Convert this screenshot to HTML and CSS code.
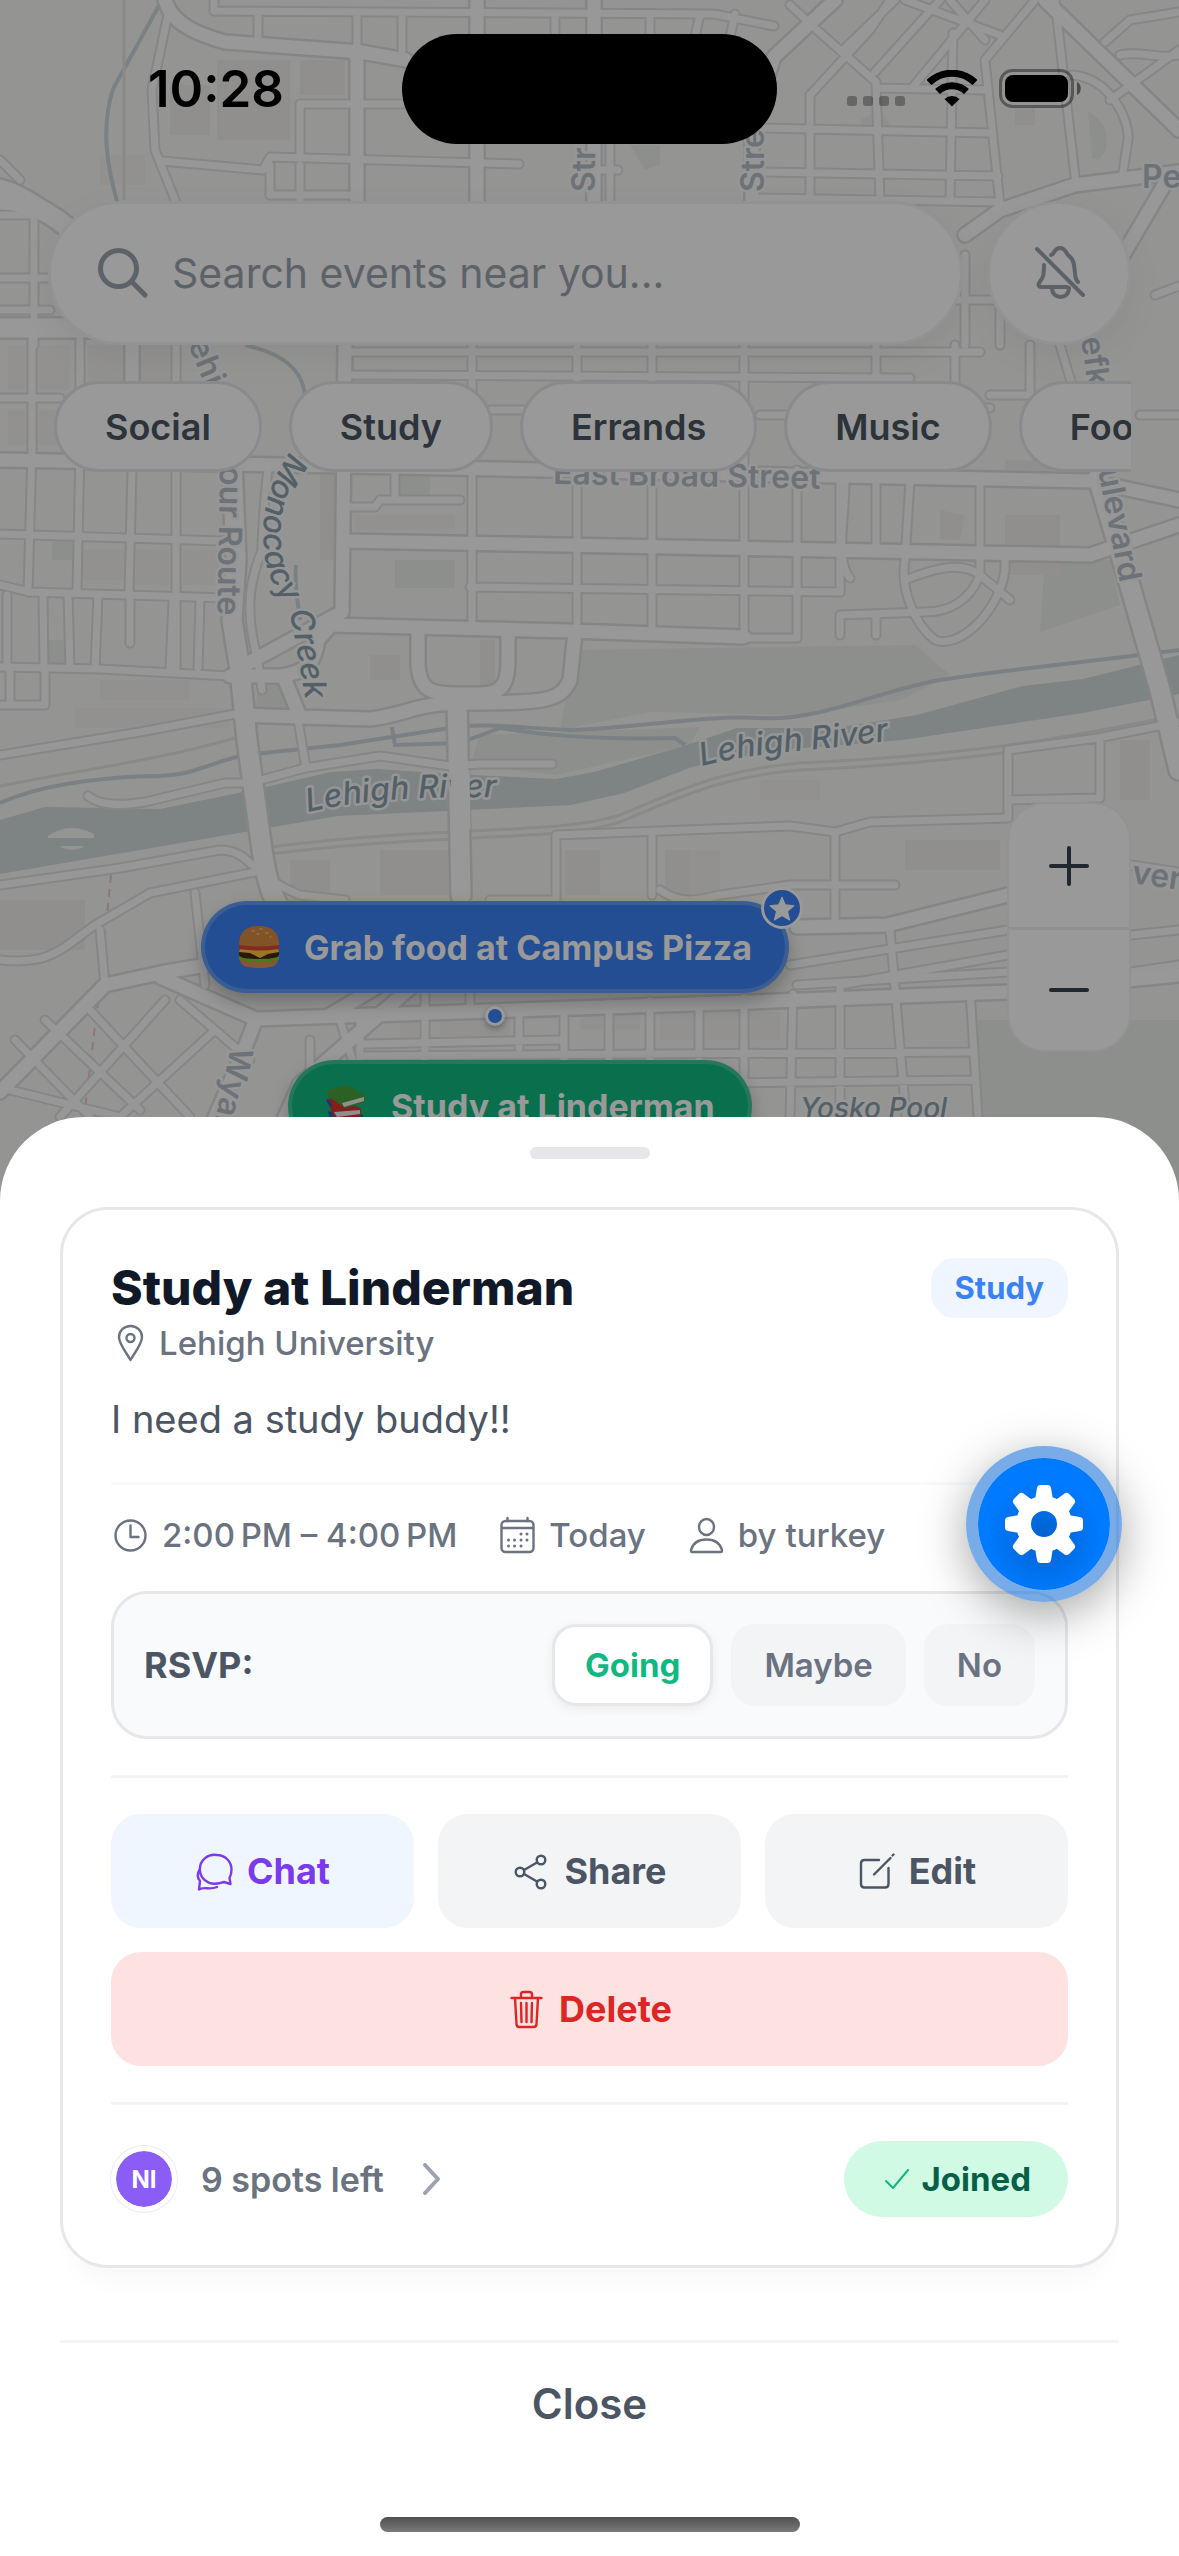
FILE: index.html
```html
<!DOCTYPE html>
<html lang="en">
<head>
<meta charset="utf-8">
<meta name="viewport" content="width=device-width, initial-scale=1">
<title>Study at Linderman</title>
<link rel="stylesheet" href="styles.css">
</head>
<body>
<div class="screen">
  <div class="map">
    <svg class="map-canvas" viewBox="0 0 1179 2556" preserveAspectRatio="xMidYMin slice" aria-hidden="true">
      <defs>
        <g id="streets-minor">
          <path d="M32 340V450L28 592M80 340V450L77 590M132 470L129 592M176 340L176 668M0 398H60M0 534L222 541M7 595V667M43 592L44 670M68 594L70 668M98 596L95 668M130 600V643M173 600L170 670M200 600L198 668M45 670V705H0M10 670V700"/>
          <path d="M0 585L30 592L225 598M0 667L100 669L230 676M268 470C264 500 262 540 262 550C254 570 249 590 250 610C250 640 258 650 262 690"/>
          <path d="M0 755L140 732L235 714M88 796C100 806 120 806 145 802L225 783L250 783L305 768L380 756L450 766L480 764H552M298 720L306 768"/>
          <path d="M472 345V625M577 345V632M652 345V630M744 345V637M797 470V638H744M876 345V400M350 352H980M350 375L910 378M490 410H560M760 415H800M876 410L990 408M470 587L840 592M350 507H375L380 500H460M395 475V500"/>
          <path d="M214 0V11L714 14L774 26M258 14V42M357 14V50M402 14V55M555 14V60M650 14V60M700 14L690 60M735 14L725 60M300 104H402M300 104V158M162 161L263 170L270 157L519 164M270 165V195H357M300 165V200M590 170H618M610 140V200"/>
          <path d="M169 10L152 90L155 150L175 200M0 160L20 180M0 215H48M34 215V345M0 278H50M0 310H50"/>
          <path d="M817 30L876 82L880 200M810 95L870 30L890 0M843 50L895 0M875 72L940 0M912 88L985 0M790 5L817 30M905 0L1000 35M950 0L985 40M953 33L950 200M985 60L1000 205M985 60L1035 0M876 88L985 90M760 128L990 133M760 172L998 176M760 198L1000 202M810 95V200"/>
          <path d="M1055 0L1076 185M1072 75C1110 78 1130 120 1128 140L1122 178M1105 42L1130 20L1179 12M1110 100L1179 50M1120 55C1140 50 1160 60 1179 55M965 255V345M1000 250V345M930 300H1000M955 345V400M1030 345V395H990M1179 286L1155 295M1179 415H1140M1060 345L1100 478"/>
          <path d="M845 480C845 520 835 560 850 578M840 480V592M876 480V548M905 560C900 590 915 625 935 640C960 650 1000 610 1005 570V550M905 580C930 570 960 560 980 575L1010 600M980 575C970 600 950 612 925 612L840 615V635M876 615V635M910 480L905 560M980 480V575"/>
          <path d="M0 885L120 868L220 850C250 850 250 875 300 895L345 900M0 960C50 965 60 950 95 925L150 893L265 870M195 893L205 985M100 930L105 985M556 900V835L790 826L835 832L870 822L1008 818V750L1098 738L1179 722M652 833V895M835 832V922M1100 738V798L1008 800M660 890C680 905 700 900 720 895L790 885H895M490 900H556"/>
          <path d="M360 1015V1117M425 1012V1060M519 1008V1048M564 1006V1117M609 1003V1117M650 1001V1117M699 1000V1117M744 998V1117M793 994L790 1117M840 985V1117M890 930L906 1117M970 990L978 1117M365 1044L560 1040M365 1056L970 1052M560 1085L975 1080M340 1020L370 1117M310 1040V1117M470 990V1010M425 990V1012M790 965L1008 930M840 985L1008 955M797 985L1008 972M1131 935L1179 930M1131 972L1179 965M1131 865L1179 872"/>
          <path d="M10 1090L120 1117M15 1040L90 1117M45 1020L140 1110M90 1010L190 1117M165 1000L60 1117M215 1030L120 1117M180 1000L250 1060"/>
        </g>
        <g id="streets-major">
          <path d="M0 460L346 466L1090 481L1179 500M345 345L342 612L245 665M331 625L571 631L744 637M345 541L1090 555L1179 525"/>
          <path d="M418 630V665C420 690 430 694 457 694H480C505 694 508 680 508 660V632M575 632L570 680C560 702 545 703 457 703"/>
          <path d="M230 676H280C310 672 315 660 318 640L331 625M240 715L300 717L370 719C400 716 420 703 457 703M285 680L300 717"/>
          <path d="M165 0C172 25 200 35 225 42L361 52L406 60M357 50V200M477 0V205M594 0V205M752 100V205M835 0L774 57L760 100M132 340V460"/>
          <path d="M1045 0L1179 130M965 235L1000 210L1075 185L1179 172M1170 175L1120 260M0 186C20 190 50 210 85 240"/>
          <path d="M0 1092L105 985L165 972L265 955M160 977L256 1019L240 1060L215 1117M256 1019L752 1002L1008 992L1179 975M425 975L300 1084L285 1117M797 927L887 925L1008 895M380 985L330 1015"/>
        </g>
        <g id="highways">
          <path d="M232 460L236 560L232 620L240 670L247 740L262 850C268 890 275 910 300 930L340 960"/>
          <path d="M457 700L461 895M1098 478L1128 579L1160 690L1179 770M0 200C30 200 60 215 90 250M0 328H100"/>
        </g>
      </defs>

      <rect width="1179" height="2556" class="land"/>
      <path class="park" d="M560 730L575 650L915 645L950 675L900 700L800 715L650 712ZM1045 560H1110L1120 605L1040 632ZM395 560H455V588H395ZM395 470H430V500H395ZM52 540H74V560H52ZM46 640H68V665H46ZM258 680H285L298 712H256ZM470 765L480 735L700 727L690 745L600 765L556 775ZM1088 112C1110 120 1112 150 1098 160L1092 158ZM630 145H660V165L645 170ZM970 1020H1179V1180H985Z"/>
      <path class="built" d="M217 60H290V140H217ZM170 85H210V135H170ZM300 60H345V95H300ZM1005 460H1050V480H1005ZM1005 515H1060V575H1005ZM940 510L965 515L960 540H940ZM320 470H340V560H320ZM380 850H455V895H380ZM290 860H330V905H290ZM905 840H1000V870H905ZM1120 740H1150V800H1120ZM0 900H85V950H0ZM565 850H600V895H565ZM665 850H690V895H665ZM860 120L880 108L890 125H862ZM1015 108H1035V125H1015ZM370 655H400V680H370ZM480 640H495V690H480ZM835 240H870V262H835Z"/>
      <path class="built faint" d="M8 345H70V390H8ZM88 345H125V440H88ZM140 345H172V380H140ZM8 410H70V445H8ZM80 550H125V580H80ZM135 550H170V585H135ZM182 550H218V585H182ZM355 515H455V530H355ZM100 680H190V700H100ZM75 708H230V728H75ZM400 1020H420V1040H400ZM440 1020H510V1036H440ZM580 1012H640V1030H580ZM660 1012H780V1040H660ZM760 780H820V800H760ZM690 850H720V895H690ZM100 155H145V185H100Z"/>
      <path class="water" d="M0 820L45 807L160 809L248 791L331 772L376 769L451 774L556 779L594 772L684 746L737 728L835 728L917 715L1023 686L1083 679L1179 655V694L1083 713L902 740L767 751L692 767L624 793L571 805L338 816L256 830L0 874Z"/>
      <path class="land" d="M48 836C60 828 75 824 94 834V838H48ZM60 846H84C80 851 64 851 60 846Z"/>
      <path class="stream" d="M0 803C40 785 90 778 150 776C190 778 210 762 245 755L340 745L450 728C480 722 520 728 570 730C640 728 700 715 760 718C820 722 880 690 940 680C1000 670 1040 668 1179 650M392 727L395 745L460 743L500 728C540 735 600 740 675 738L685 745M162 0L113 89C100 130 108 170 118 205M245 345C290 355 305 375 305 400L300 440M296 565C294 590 298 600 300 620"/>
      <path class="rail" d="M1179 715C1080 735 980 755 800 763C720 770 680 790 620 815C560 835 440 825 270 847M1179 722C1080 742 980 762 800 770C720 777 680 797 620 822C560 842 440 832 270 854M0 786C80 770 160 760 235 738M124 0V200"/>
      <path class="trail" d="M111 875L100 985L84 1117"/>

      <use href="#streets-minor" class="minor-casing"/>
      <use href="#streets-major" class="major-casing"/>
      <use href="#highways" class="highway-casing"/>
      <use href="#streets-minor" class="minor"/>
      <use href="#streets-major" class="major"/>
      <use href="#highways" class="highway"/>

      <path id="creek-line" d="M290 452C264 490 262 520 264 550C268 590 288 600 292 625C300 660 302 690 318 760" fill="none"/>
      <path id="river-west" d="M308 812C360 800 430 794 540 799" fill="none"/>
      <path id="river-east" d="M702 766C760 750 830 752 930 734" fill="none"/>
      <g class="road-label">
        <text transform="translate(220 466) rotate(91)">our Route</text>
        <text transform="translate(188 344) rotate(68)">ehi</text>
        <text transform="translate(595 192) rotate(-90)">Str</text>
        <text transform="translate(764 192) rotate(-90)">Stre</text>
        <text transform="translate(1081 338) rotate(82)">efk</text>
        <text transform="translate(1098 470) rotate(79)">ulevard</text>
        <text transform="translate(231 1046) rotate(102)">Wyan</text>
        <text transform="translate(553 484) rotate(1)">East Broad Street</text>
        <text x="1142" y="188">Pe</text>
        <text transform="translate(1131 883) rotate(8)">ver</text>
      </g>
      <g class="water-label">
        <text><textPath href="#creek-line">Monocacy Creek</textPath></text>
        <text><textPath href="#river-west">Lehigh River</textPath></text>
        <text><textPath href="#river-east">Lehigh River</textPath></text>
        <text class="place-label" x="800" y="1118">Yosko Pool</text>
      </g>
      <path class="highway bridge" d="M460 770L461 830"/>
    </svg>

    <button class="pin pin-food" type="button">
      <svg class="emoji" viewBox="0 0 42 44" aria-hidden="true">
        <path d="M2 34H40C40 41 34 43 21 43S2 41 2 34Z" fill="#d99355"/>
        <path d="M1 32C5 30 37 30 41 32C42 36 38 36 36 35C33 39 29 36 26 36C22 39 18 36 15 36C11 39 8 35 6 35C2 36 0 35 1 32Z" fill="#7fc832"/>
        <path d="M1 27H41C42 33 37 34 21 34S0 33 1 27Z" fill="#4b2613"/>
        <path d="M2 24H40L41 27L30 29L22 33L12 28L1 27Z" fill="#ffc83a"/>
        <path d="M1 20H41V24Q21 27 1 24Z" fill="#e0453a"/>
        <path d="M1 20C1 7 8 1 21 1S41 7 41 20Q21 23 1 20Z" fill="#d98a42"/>
        <path d="M14 6h2M22 4h2M28 8h2M19 9h2M32 12h1" stroke="#f8dfae" stroke-width="1" stroke-linecap="round"/>
      </svg>
      <span>Grab food at Campus Pizza</span>
      <span class="pin-badge">
        <svg viewBox="0 0 24 24" aria-hidden="true"><path d="M12 2l3 7 8 1-6 5 2 8-7-4-7 4 2-8-6-5 8-1z" fill="#fff" stroke="#fff" stroke-linejoin="round"/></svg>
      </span>
    </button>
    <span class="pin-dot"></span>
    <button class="pin pin-study" type="button">
      <svg class="emoji" viewBox="0 0 42 44" aria-hidden="true">
        <path d="M3 27L28 35L38 30V38L26 43L5 36Z" fill="#3155b8"/>
        <path d="M2 15L8 14L36 24V32L28 36L8 32Z" fill="#d93632"/>
        <path d="M9 28L35 26V30L12 33Z" fill="#eeeeec"/>
        <path d="M1 15L5 17L8 24L3 20Z" fill="#3155b8"/>
        <path d="M2 6L22 1L40 11V18L20 24L3 12Z" fill="#49a33d"/>
        <path d="M17 19L39 13V17L19 23Z" fill="#eeeeec"/>
      </svg>
      <span>Study at Linderman</span>
    </button>

    <div class="zoom">
      <button type="button" aria-label="Zoom in"><svg viewBox="0 0 40 40"><path d="M20 2V38M2 20H38"/></svg></button>
      <button type="button" aria-label="Zoom out"><svg viewBox="0 0 40 40"><path d="M2 20H38"/></svg></button>
    </div>
  </div>

  <div class="status">
    <time class="clock">10:28</time>
    <span class="island"></span>
    <div class="indicators">
      <svg class="signal" viewBox="0 0 58 38" aria-hidden="true"><g fill="#000" opacity=".3"><rect x="0" y="26" width="10" height="10" rx="3"/><rect x="16" y="26" width="10" height="10" rx="3"/><rect x="32" y="26" width="10" height="10" rx="3"/><rect x="48" y="26" width="10" height="10" rx="3"/></g></svg>
      <svg class="wifi" viewBox="0 0 50 38" aria-hidden="true"><g fill="none" stroke="#000" stroke-width="7"><path d="M2 12.500A33 33 0 0 1 48 12.500"/><path d="M10.500 21.500A21 21 0 0 1 39.500 21.500"/></g><path d="M17.500 29A11 11 0 0 1 32.500 29L25 36.500Z"/></svg>
      <svg class="battery" viewBox="0 0 82 40" aria-hidden="true"><rect x="1.500" y="1.500" width="72" height="36" rx="12" fill="none" stroke="#000" stroke-opacity=".4" stroke-width="3"/><rect x="6" y="6" width="63" height="27" rx="8"/><path d="M78 13C83 15 83 24 78 26Z" fill-opacity=".5"/></svg>
    </div>
  </div>

  <header class="header">
    <div class="search-row">
      <div class="search">
        <label for="search" aria-label="Search events">
          <svg viewBox="0 0 50 50" aria-hidden="true"><circle cx="20.500" cy="20.500" r="18"/><path d="M34 34L47 47"/></svg>
        </label>
        <input id="search" type="text" placeholder="Search events near you...">
      </div>
      <button class="bell" type="button" aria-label="Notifications off">
        <svg viewBox="0 0 52 54" aria-hidden="true"><path d="M4 3L50 49M18 9C21 9 21 2 27 2S33 8 36 10C42 14 41 21 42 27C42 32 43 34 45 36M11 19C11 30 10 32 6 37C5 39 6 41 8 41H34M19 42C19 54 36 54 36 42"/></svg>
      </button>
    </div>
    <nav class="chips" aria-label="Categories">
      <button class="chip" type="button">Social</button>
      <button class="chip" type="button">Study</button>
      <button class="chip" type="button">Errands</button>
      <button class="chip" type="button">Music</button>
      <button class="chip" type="button">Food</button>
    </nav>
  </header>

  <div class="backdrop"></div>

  <main class="sheet">
    <div class="handle"></div>
    <article class="card">
      <div class="card-head">
        <h1>Study at Linderman</h1>
        <span class="tag">Study</span>
      </div>
      <p class="place">
        <svg class="icon" viewBox="0 0 39 39" aria-hidden="true"><path d="M19.500 36C15 28 8 20 8 13A11.500 11 0 0 1 31 13C31 20 24 28 19.500 36Z"/><circle cx="19.500" cy="14" r="4"/></svg>
        <span>Lehigh University</span>
      </p>
      <p class="about">I need a study buddy!!</p>
      <ul class="meta">
        <li>
          <svg class="icon" viewBox="0 0 39 39" aria-hidden="true"><circle cx="19.500" cy="19.500" r="15"/><path d="M19.500 9.500V21H27.500"/></svg>
          <span>2:00&#8239;PM – 4:00&#8239;PM</span>
        </li>
        <li>
          <svg class="icon" viewBox="0 0 39 39" aria-hidden="true"><rect x="3.500" y="5" width="32" height="31" rx="4"/><path d="M4 12H35M9.500 2V5M29.500 2V5"/><path class="dots" d="M23 18h.01M29 18h.01M10.500 24h.01M16.500 24h.01M23 24h.01M29 24h.01M10.500 30h.01M16.500 30h.01M23 30h.01"/></svg>
          <span>Today</span>
        </li>
        <li>
          <svg class="icon" viewBox="0 0 39 39" aria-hidden="true"><ellipse cx="19.500" cy="11" rx="7.500" ry="8"/><path d="M5 36C4 36 4 35 4 34C6 27 12 23.500 19.500 23.500S33 27 35 34C35 35 35 36 34 36Z"/></svg>
          <span>by turkey</span>
        </li>
      </ul>
      <div class="rsvp" role="group" aria-labelledby="rsvp-label">
        <span id="rsvp-label">RSVP:</span>
        <button class="answer chosen" type="button" aria-pressed="true">Going</button>
        <button class="answer" type="button" aria-pressed="false">Maybe</button>
        <button class="answer" type="button" aria-pressed="false">No</button>
      </div>
      <div class="actions">
        <button class="action chat" type="button">
          <svg class="icon" viewBox="0 0 39 39" aria-hidden="true"><path d="M22 3A14.500 14.500 0 1 0 22 31.500C25 31.500 26.500 30.500 29 30L35.500 32L34.500 26C35.500 24 36.500 21 36.500 17.500A14.500 14.500 0 0 0 22 3Z"/><path d="M4.500 18C2 22 2.500 26 5 29L4 37.500C9 34 14 38.500 22 35"/></svg>
          Chat
        </button>
        <button class="action" type="button">
          <svg class="icon" viewBox="0 0 39 39" aria-hidden="true"><circle cx="8" cy="20" r="4.300"/><circle cx="29" cy="8" r="4.300"/><circle cx="29" cy="32" r="4.300"/><path d="M12 18L25 10.500M12 22L25 29.500"/></svg>
          Share
        </button>
        <button class="action" type="button">
          <svg class="icon" viewBox="0 0 39 39" aria-hidden="true"><path d="M22 8H7.500Q4 8 4 11.500V32Q4 35.500 7.500 35.500H28Q31.500 35.500 31.500 32V16M17 22.500L33.500 6M35.500 3.500L36.500 2.500"/></svg>
          Edit
        </button>
        <button class="action delete" type="button">
          <svg class="icon" viewBox="0 0 39 39" aria-hidden="true"><path d="M4.500 8H34.500M8 8L9.500 34Q9.500 37 12.500 37H26.500Q29.500 37 29.500 34L31 8M14 8V4.500Q14 2 16.500 2H22.500Q25 2 25 4.500V8M14 13L14.500 32M19.500 13V32M25 13L24.500 32"/></svg>
          Delete
        </button>
      </div>
      <div class="people">
        <button class="guests" type="button">
          <span class="avatar">NI</span>
          <span>9 spots left</span>
          <svg viewBox="0 0 18 32" aria-hidden="true"><path d="M2 2L15 16L2 30"/></svg>
        </button>
        <button class="joined" type="button">
          <svg viewBox="0 0 26 24" aria-hidden="true"><path d="M2 14L9 21L24 3"/></svg>
          Joined
        </button>
      </div>
    </article>
    <footer class="foot">
      <button class="close" type="button">Close</button>
    </footer>
    <div class="home-bar"></div>
    <button class="settings" type="button" aria-label="Settings">
      <svg viewBox="-40 -40 80 80" aria-hidden="true">
        <defs><path id="tooth" d="M-9 -24L-7 -36Q-6.500 -39 -3.500 -39H3.500Q6.500 -39 7 -36L9 -24Z"/></defs>
        <g fill="#fff"><use href="#tooth"/><use href="#tooth" transform="rotate(45)"/><use href="#tooth" transform="rotate(90)"/><use href="#tooth" transform="rotate(135)"/><use href="#tooth" transform="rotate(180)"/><use href="#tooth" transform="rotate(225)"/><use href="#tooth" transform="rotate(270)"/><use href="#tooth" transform="rotate(315)"/></g>
        <circle r="20.500" fill="none" stroke="#fff" stroke-width="15"/>
      </svg>
    </button>
  </main>
</div>
</body>
</html>
```
FILE: styles.css
```css
* { box-sizing: border-box; }
body { margin: 0; font-family: Inter, "Liberation Sans", sans-serif; color: #4b5563; }
button { margin: 0; padding: 0; border: 0; background: none; font: inherit; color: inherit; white-space: nowrap; }
h1, p, ul { margin: 0; padding: 0; list-style: none; }
svg { display: block; flex: none; }

.screen { position: relative; min-height: 100vh; display: flex; flex-direction: column; overflow: hidden; }

/* Map */
.map { position: absolute; inset: 0; background: #f7f7f4; }
.map-canvas { width: 100%; height: 100%; }
.land { fill: #f7f7f4; }
.park { fill: #ebefe9; }
.built { fill: #f0efed; }
.faint { opacity: .6; }
.water { fill: #d3dadc; }
.stream { fill: none; stroke: #ccd6da; stroke-width: 4; }
.rail { fill: none; stroke: #e6e5e2; stroke-width: 3; }
.trail { fill: none; stroke: #e6c8c6; stroke-width: 2; stroke-dasharray: 8 6; }
.minor-casing, .minor, .major-casing, .major, .highway-casing, .highway { fill: none; stroke-linecap: round; stroke-linejoin: round; }
.minor-casing { stroke: #e0e0df; stroke-width: 11; }
.minor { stroke: #fcfcfc; stroke-width: 7; }
.major-casing { stroke: #dedede; stroke-width: 18; }
.major { stroke: #fdfdfd; stroke-width: 13; }
.highway-casing { stroke: #dedede; stroke-width: 24; }
.highway { stroke: #fdfdfd; stroke-width: 19; }
.bridge { stroke-linecap: butt; }
.road-label, .water-label { font-family: Inter, sans-serif; font-size: 32px; paint-order: stroke; stroke: #fafafa; stroke-width: 5; stroke-linejoin: round; }
.road-label { fill: #b4bfc8; font-weight: 600; }
.water-label { fill: #8aa0ae; font-style: italic; font-weight: 500; }
.place-label { font-size: 28px; }

.pin { position: absolute; height: 92px; display: flex; align-items: center; gap: 24px; padding: 0 33px; border: 4px solid rgba(255, 255, 255, .2); border-radius: 46px; color: #fff; font-size: 34px; font-weight: 700; box-shadow: 0 9px 18px rgba(0, 0, 0, .25); }
.pin-food { left: 201px; top: 901px; background-color: #3b82f6; }
.pin-study { left: 288px; top: 1060px; background-color: #10b981; }
.emoji { width: 42px; height: 44px; }
.pin-badge { position: absolute; right: -18px; top: -18px; width: 42px; height: 42px; display: grid; place-items: center; border: 3px solid #fff; border-radius: 50%; background: #3b82f6; }
.pin-badge svg { width: 26px; height: 26px; }
.pin-dot { position: absolute; left: 485px; top: 1006px; width: 20px; height: 20px; border: 3px solid #fff; border-radius: 50%; background: #3b82f6; box-shadow: 0 3px 6px rgba(0, 0, 0, .3); }

.zoom { position: absolute; right: 50px; top: 804px; width: 120px; display: grid; border-radius: 36px; background: #fff; box-shadow: 0 0 0 2px #f3f4f6; }
.zoom button { height: 123px; display: grid; place-items: center; }
.zoom button + button { border-top: 3px solid #f0f1f3; }
.zoom svg { width: 40px; height: 40px; fill: none; stroke: #374151; stroke-width: 4; stroke-linecap: round; }

/* Status bar */
.status { position: relative; z-index: 2; display: grid; grid-template-columns: 1fr 375px 1fr; align-items: center; padding-top: 34px; color: #000; }
.clock { padding-left: 148px; font-size: 51px; font-weight: 600; line-height: 60px; }
.island { height: 110px; border-radius: 55px; background: #000; }
.indicators { display: flex; justify-content: flex-end; align-items: center; gap: 22px; padding-right: 98px; }
.signal { width: 58px; height: 38px; }
.wifi { width: 50px; height: 38px; }
.battery { width: 82px; height: 40px; }

/* Search and categories */
.header { position: relative; padding: 57px 48px 0; }
.search-row { display: flex; gap: 24px; }
.search { flex: 1; height: 144px; display: flex; align-items: center; gap: 24px; padding: 0 47px; border: 3px solid #f3f4f6; border-radius: 72px; background: #fff; box-shadow: 0 12px 36px rgba(0, 0, 0, .06); }
.search svg { width: 50px; height: 50px; fill: none; stroke: #9ca3af; stroke-width: 5; stroke-linecap: round; }
.search input { flex: 1; min-width: 0; height: 60px; padding: 0; border: 0; outline: 0; background: none; font: 400 41px Inter, sans-serif; }
.search input::placeholder { color: #9ca3af; opacity: 1; }
.bell { width: 144px; height: 144px; display: grid; place-items: center; border: 3px solid #f3f4f6; border-radius: 50%; background: #fff; box-shadow: 0 12px 36px rgba(0, 0, 0, .06); }
.bell svg { width: 52px; height: 54px; fill: none; stroke: #9ca3af; stroke-width: 4; stroke-linecap: round; stroke-linejoin: round; }
.chips { display: flex; gap: 27px; margin-top: 36px; padding: 0 0 12px 6px; overflow: hidden; }
.chip { flex: none; height: 91px; padding: 0 48px; border: 3px solid #e5e7eb; border-radius: 46px; background: #fff; color: #4b5563; font-size: 36px; font-weight: 600; }

.backdrop { position: absolute; inset: 0; z-index: 1; background: rgba(0, 0, 0, .4); }

/* Bottom sheet */
.sheet { position: relative; z-index: 2; margin-top: auto; padding: 30px 60px 24px; border-radius: 84px 84px 0 0; background: #fff; }
.handle { width: 120px; height: 12px; margin: 0 auto 48px; border-radius: 6px; background: #e5e7eb; }
.card { padding: 48px; border: 3px solid #e5e7eb; border-radius: 48px; background: #fff; box-shadow: 0 24px 24px -12px rgba(0, 0, 0, .03); }
.icon { width: 39px; height: 39px; fill: none; stroke: currentColor; stroke-width: 2.4; stroke-linecap: round; stroke-linejoin: round; }
.icon .dots { stroke-width: 3; }

.card-head { display: flex; justify-content: space-between; align-items: center; }
h1 { color: #111827; font-size: 48px; font-weight: 800; line-height: 60px; }
.tag { padding: 0 24px; border-radius: 24px; background: #eff6ff; color: #3b82f6; font-size: 31px; font-weight: 700; line-height: 60px; }
.place, .meta { color: #6b7280; font-size: 33px; line-height: 40px; font-weight: 500; }
.place { display: flex; align-items: center; gap: 9px; margin-top: 5px; }
.about { margin: 26px 0 33px; font-size: 38px; line-height: 60px; }
.meta { display: flex; gap: 41px; margin-bottom: 36px; padding-top: 30px; border-top: 3px solid #f9fafb; }
.meta li { display: flex; align-items: center; gap: 12px; }

.rsvp { display: flex; align-items: center; gap: 18px; padding: 30px; border: 3px solid #e5e7eb; border-radius: 36px; background: #f9fafb; }
.rsvp span { margin-right: auto; font-size: 36px; font-weight: 700; }
.answer { height: 82px; padding: 0 30px; border: 3px solid #f3f4f6; border-radius: 24px; background: #f3f4f6; color: #6b7280; font-size: 33px; font-weight: 600; }
.chosen { border-color: #e5e7eb; background: #fff; color: #10b981; font-weight: 700; box-shadow: 0 3px 12px rgba(0, 0, 0, .06); }

.actions { display: grid; grid-template-columns: repeat(3, 1fr); gap: 24px; margin: 36px 0; padding-top: 36px; border-top: 3px solid #f3f4f6; }
.action { height: 114px; display: flex; align-items: center; justify-content: center; gap: 13px; border-radius: 30px; background: #f3f4f6; font-size: 36px; font-weight: 700; }
.chat { background: #eff6ff; color: #7c3aed; }
.delete { grid-column: 1 / -1; background: #fee2e2; color: #dc2626; }

.people { display: flex; align-items: center; justify-content: space-between; padding-top: 36px; border-top: 3px solid #f3f4f6; }
.guests { display: flex; align-items: center; color: #6b7280; font-size: 34px; font-weight: 600; }
.avatar { width: 66px; height: 66px; margin-right: 24px; display: grid; place-items: center; border: 5px solid #fff; border-radius: 50%; background: #8b5cf6; background-clip: padding-box; box-shadow: 0 0 0 1px #ede9fe; color: #fff; font-size: 24px; font-weight: 700; }
.guests svg { width: 18px; height: 32px; margin-left: 39px; fill: none; stroke: #9ca3af; stroke-width: 4; stroke-linecap: round; stroke-linejoin: round; }
.joined { height: 76px; display: flex; align-items: center; gap: 12px; padding: 0 37px 0 40px; border-radius: 38px; background: #d1fae5; color: #065f46; font-size: 33px; font-weight: 700; }
.joined svg { width: 26px; height: 24px; fill: none; stroke: #10b981; stroke-width: 2; stroke-linecap: round; stroke-linejoin: round; }

.foot { margin-top: 72px; border-top: 3px solid #f3f4f6; }
.close { width: 100%; height: 120px; font-size: 42px; font-weight: 600; }
.home-bar { width: 420px; height: 15px; margin: 54px auto 0; border-radius: 8px; background: linear-gradient(#505050, #7a7a7a); }

.settings { position: absolute; right: 57px; top: 329px; width: 156px; height: 156px; display: grid; place-items: center; border: 12px solid rgba(0, 98, 214, .53); border-radius: 50%; background: radial-gradient(circle at 50% 60%, #0062cc 0, #007aff 55%); background-clip: padding-box; box-shadow: 0 12px 48px rgba(0, 0, 0, .35); }
.settings svg { width: 80px; height: 80px; }
```
